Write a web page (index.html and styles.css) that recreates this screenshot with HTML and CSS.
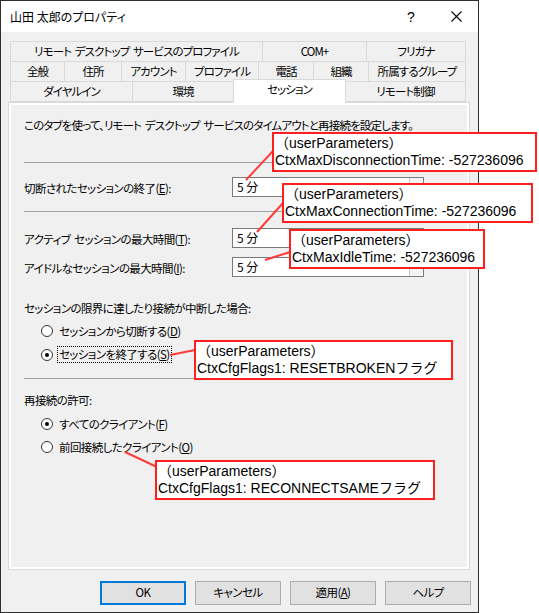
FILE: index.html
```html
<!DOCTYPE html>
<html lang="ja">
<head>
<meta charset="utf-8">
<title>山田 太郎のプロパティ</title>
<link rel="stylesheet" href="styles.css">
</head>
<body>
<div class="screen">
  <div class="window">
    <div class="titlebar">
      <span class="title">山田 太郎のプロパティ</span>
      <span class="help">?</span>
      <span class="close"><svg width="11" height="11" viewBox="0 0 11 11"><path d="M0.5 0.5L10.5 10.5M10.5 0.5L0.5 10.5" stroke="#000" stroke-width="1.1" fill="none"/></svg></span>
    </div>
    <div class="body">
      <div class="tabs">
        <div class="tabrow">
          <div class="tab w253">リモート デスクトップ サービスのプロファイル</div>
          <div class="tab w105">COM+</div>
          <div class="tab w100">フリガナ</div>
        </div>
        <div class="tabrow">
          <div class="tab w55">全般</div>
          <div class="tab w58">住所</div>
          <div class="tab w65">アカウント</div>
          <div class="tab w74">プロファイル</div>
          <div class="tab w56">電話</div>
          <div class="tab w56">組織</div>
          <div class="tab w98">所属するグループ</div>
        </div>
        <div class="tabrow">
          <div class="tab w123">ダイヤルイン</div>
          <div class="tab w102">環境</div>
          <div class="tab w113 selected">セッション</div>
          <div class="tab w121">リモート制御</div>
        </div>
      </div>
      <div class="panel">
        <div class="page">
          <p class="intro">このタブを使って、リモート デスクトップ サービスのタイムアウトと再接続を設定します。</p>
          <div class="sep sep1"></div>
          <div class="field f1">
            <span class="label">切断されたセッションの終了(<u>E</u>):</span>
            <span class="combo"><span class="val">5 分</span><span class="drop"></span></span>
          </div>
          <div class="sep sep2"></div>
          <div class="field f2">
            <span class="label">アクティブ セッションの最大時間(<u>T</u>):</span>
            <span class="combo"><span class="val">5 分</span><span class="drop"></span></span>
          </div>
          <div class="field f3">
            <span class="label">アイドルなセッションの最大時間(<u>I</u>):</span>
            <span class="combo"><span class="val">5 分</span><span class="drop"></span></span>
          </div>
          <p class="glabel g1">セッションの限界に達したり接続が中断した場合:</p>
          <div class="radio r1"><span class="dot"></span><span class="rtext">セッションから切断する(<u>D</u>)</span></div>
          <div class="radio r2 checked"><span class="dot"></span><span class="rtext focus">セッションを終了する(<u>S</u>)</span></div>
          <div class="sep sep3"></div>
          <p class="glabel g2">再接続の許可:</p>
          <div class="radio r3 checked"><span class="dot"></span><span class="rtext">すべてのクライアント(<u>F</u>)</span></div>
          <div class="radio r4"><span class="dot"></span><span class="rtext">前回接続したクライアント(<u>O</u>)</span></div>
        </div>
      </div>
      <div class="buttons">
        <div class="btn default">OK</div>
        <div class="btn">キャンセル</div>
        <div class="btn">適用(<u>A</u>)</div>
        <div class="btn">ヘルプ</div>
      </div>
    </div>
  </div>

  <svg class="connectors" width="539" height="613" viewBox="0 0 539 613">
    <g stroke="#ff3a3a" stroke-width="2" fill="none">
      <line x1="273" y1="151" x2="246" y2="180"/>
      <line x1="283" y1="203" x2="257" y2="232"/>
      <line x1="290" y1="252" x2="265" y2="260"/>
      <line x1="170" y1="355" x2="195" y2="350"/>
      <line x1="125" y1="452" x2="157" y2="467"/>
    </g>
  </svg>

  <div class="note n1"><div>（userParameters）</div><div>CtxMaxDisconnectionTime: -527236096</div></div>
  <div class="note n2"><div>（userParameters）</div><div>CtxMaxConnectionTime: -527236096</div></div>
  <div class="note n3"><div>（userParameters）</div><div>CtxMaxIdleTime: -527236096</div></div>
  <div class="note n4"><div>（userParameters）</div><div>CtxCfgFlags1: RESETBROKENフラグ</div></div>
  <div class="note n5"><div>（userParameters）</div><div>CtxCfgFlags1: RECONNECTSAMEフラグ</div></div>
</div>
</body>
</html>
```

FILE: styles.css
```css
* { box-sizing: border-box; }
html, body { margin: 0; padding: 0; background: #fff; }
body {
  font-family: "Noto Sans CJK JP", "Noto Sans", sans-serif;
  font-size: 11.5px;
  letter-spacing: -0.6px;
  word-spacing: 2px;
  color: #000;
  font-feature-settings: "palt";
}
p { margin: 0; }
u { text-decoration: underline; text-underline-offset: 1px; }

.screen { position: relative; width: 539px; height: 613px; overflow: hidden; }

.window {
  width: 479px;
  height: 613px;
  border: 1px solid #2e2e2e;
  display: flex;
  flex-direction: column;
  background: #f0f0f0;
}

.titlebar {
  height: 31px;
  background: #fff;
  display: flex;
  align-items: center;
  padding-left: 9px;
  flex: none;
}
.title { flex: 1; font-size: 12px; letter-spacing: 0; word-spacing: 0; }
.help { width: 14px; font-size: 14px; letter-spacing: 0; font-family: "Liberation Sans", sans-serif; margin-right: 33px; text-align: center; }
.close { width: 11px; height: 11px; margin-right: 16px; display: flex; }

.body { flex: 1; display: flex; flex-direction: column; padding-top: 9px; }

.tabs { padding-left: 9px; position: relative; z-index: 2; }
.tabrow { display: flex; height: 20px; }
.tab {
  height: 21px;
  border: 1px solid #d9d9d9;
  background: #f0f0f0;
  margin-left: -1px;
  display: flex;
  align-items: center;
  justify-content: center;
  line-height: 1;
  white-space: nowrap;
  flex: none;
  letter-spacing: -0.9px;
}
.tab:first-child { margin-left: 0; }
.tab.selected {
  background: #fff;
  height: 24px;
  margin-top: -2px;
  border-bottom-color: #fff;
  position: relative;
  z-index: 3;
  padding-bottom: 2px;
}
.w253 { width: 253px; } .w105 { width: 105px; } .w100 { width: 100px; }
.w55 { width: 55px; } .w58 { width: 58px; } .w65 { width: 65px; } .w74 { width: 74px; }
.w56 { width: 56px; } .w98 { width: 98px; }
.w123 { width: 123px; } .w102 { width: 102px; } .w113 { width: 113px; } .w121 { width: 121px; }

.panel {
  margin-top: 1px;
  margin-left: 7px;
  width: 462px;
  height: 468px;
  border: 1px solid #d9d9d9;
  background: #fff;
  padding: 2px;
  position: relative;
  z-index: 1;
}
.page {
  height: 100%;
  background: #f0f0f0;
  padding: 0 43px 0 13px;
  display: flex;
  flex-direction: column;
}
.intro { margin-top: 12px; height: 16px; line-height: 16px; white-space: nowrap; letter-spacing: -0.85px; }
.sep { height: 1px; background: #a0a0a0; flex: none; }
.sep1 { margin-top: 29px; }
.sep2 { margin-top: 14px; }
.sep3 { margin-top: 15px; }

.field { display: flex; align-items: center; justify-content: space-between; height: 20px; flex: none; }
.f1 { margin-top: 14px; }
.f2 { margin-top: 16px; }
.f3 { margin-top: 9px; }
.label { line-height: 16px; padding-top: 2px; white-space: nowrap; }
.combo {
  width: 192px;
  height: 20px;
  background: #fff;
  border: 1px solid #7a7a7a;
  display: flex;
  align-items: center;
  position: relative;
}
.val { flex: 1; padding-left: 4px; line-height: 16px; font-size: 12px; letter-spacing: 0; word-spacing: 0; }
.drop { width: 14px; height: 100%; border-left: 1px solid #c9c9c9; background: #f3f3f3; }

.glabel { height: 16px; line-height: 16px; }
.g1 { margin-top: 23px; }
.g2 { margin-top: 13px; }

.radio { display: flex; align-items: center; height: 16px; padding-left: 17px; flex: none; }
.r1 { margin-top: 7px; }
.r2 { margin-top: 7px; height: 17px; }
.r3 { margin-top: 8px; }
.r4 { margin-top: 7px; }
.dot {
  width: 12px; height: 12px;
  border: 1px solid #333;
  border-radius: 50%;
  background: #fff;
  margin-right: 4px;
  display: flex; align-items: center; justify-content: center;
  flex: none;
}
.radio.checked .dot::after {
  content: "";
  width: 4px; height: 4px;
  border-radius: 50%;
  background: #000;
}
.rtext { line-height: 15px; padding: 0 1px; border: 1px dotted transparent; white-space: nowrap; }
.rtext.focus { border-color: #000; }

.buttons {
  display: flex;
  justify-content: flex-end;
  gap: 9px;
  padding-right: 7px;
  margin-top: 11px;
}
.btn {
  width: 86px;
  height: 24px;
  background: #e1e1e1;
  border: 1px solid #adadad;
  display: flex;
  align-items: center;
  justify-content: center;
  line-height: 1;
}
.btn.default { border: 2px solid #0078d7; }

.connectors { position: absolute; left: 0; top: 0; z-index: 5; pointer-events: none; }

.note {
  position: absolute;
  z-index: 6;
  height: 40px;
  border: 2px solid #ff1f1f;
  background: #fff;
  font-family: "Liberation Sans", "Noto Sans CJK JP", sans-serif;
  font-feature-settings: normal;
  font-size: 14px;
  letter-spacing: 0;
  word-spacing: 0;
  line-height: 17px;
  padding: 1px 0 0 1px;
  white-space: nowrap;
  color: #000;
}
.n1 { left: 272px; top: 132px; width: 265px; }
.n2 { left: 282px; top: 183px; width: 251px; }
.n3 { left: 289px; top: 229px; width: 196px; }
.n4 { left: 194px; top: 340px; width: 259px; }
.n5 { left: 155px; top: 460px; width: 280px; }
```
